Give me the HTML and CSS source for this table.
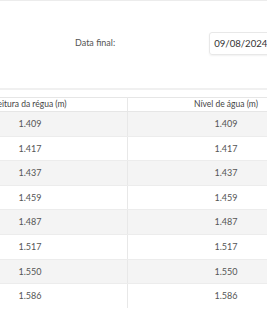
FILE: index.html
```html
<!DOCTYPE html>
<html lang="pt-BR">
<head>
<meta charset="utf-8">
<link rel="stylesheet" href="styles.css">
</head>
<body>
<div class="page">
  <div class="filters">
    <span class="label">Data final:</span>
    <div class="date-input">09/08/2024</div>
  </div>
  <div class="sep"></div>
  <div class="table-wrap">
    <table class="data">
      <thead>
        <tr><th>Leitura da régua (m)</th><th>Nível de água (m)</th></tr>
      </thead>
      <tbody>
        <tr><td>1.409</td><td>1.409</td></tr>
        <tr><td>1.417</td><td>1.417</td></tr>
        <tr><td>1.437</td><td>1.437</td></tr>
        <tr><td>1.459</td><td>1.459</td></tr>
        <tr><td>1.487</td><td>1.487</td></tr>
        <tr><td>1.517</td><td>1.517</td></tr>
        <tr><td>1.550</td><td>1.550</td></tr>
        <tr><td>1.586</td><td>1.586</td></tr>
      </tbody>
    </table>
  </div>
</div>
</body>
</html>
```
FILE: styles.css
```css
html, body {
  margin: 0;
  padding: 0;
  background: #fff;
  overflow: hidden;
}
body {
  font-family: Lato, "Open Sans", sans-serif;
  color: #555;
}
.page {
  width: 267px;
  height: 322px;
  overflow: hidden;
  border-top: 1px solid #ececec;
  box-sizing: border-box;
}
.filters {
  height: 87px;
  display: flex;
  align-items: flex-start;
  padding-top: 31px;
  box-sizing: border-box;
}
.label {
  flex: 0 0 auto;
  white-space: nowrap;
  font-size: 9px;
  color: #555;
  margin-left: 75px;
  margin-top: 5px;
}
.date-input {
  flex: 0 0 auto;
  margin-left: 94px;
  height: 21px;
  line-height: 21px;
  padding: 0 4px;
  border: 1px solid #e8e8e8;
  border-radius: 3px;
  box-shadow: 0 1px 2px rgba(0,0,0,0.06);
  font-size: 9.6px;
  color: #333;
  white-space: nowrap;
}
.sep {
  height: 2px;
  background: #f0f0f0;
}
.table-wrap {
  margin-top: 7px;
  margin-left: -67px;
}
.data {
  border-collapse: collapse;
  width: 392px;
  table-layout: fixed;
}
.data th, .data td {
  text-align: center;
  border-right: 1px solid #e8e8e8;
  padding: 0;
}
.data th:first-child, .data td:first-child {
  width: 194px;
}
.data th {
  font-weight: normal;
  font-size: 8.5px;
  color: #444;
  height: 13px;
  line-height: 13px;
  border-top: 1px solid #e6e6e6;
  border-bottom: 1px solid #e6e6e6;
}
.data td {
  font-size: 9px;
  height: 23.6px;
  line-height: 23.6px;
  border-bottom: 1px solid #ececec;
  color: #555;
}
.data tbody tr:nth-child(odd) td {
  background: #f4f4f4;
}
.data tbody tr:last-child td {
  border-bottom: none;
}
```
